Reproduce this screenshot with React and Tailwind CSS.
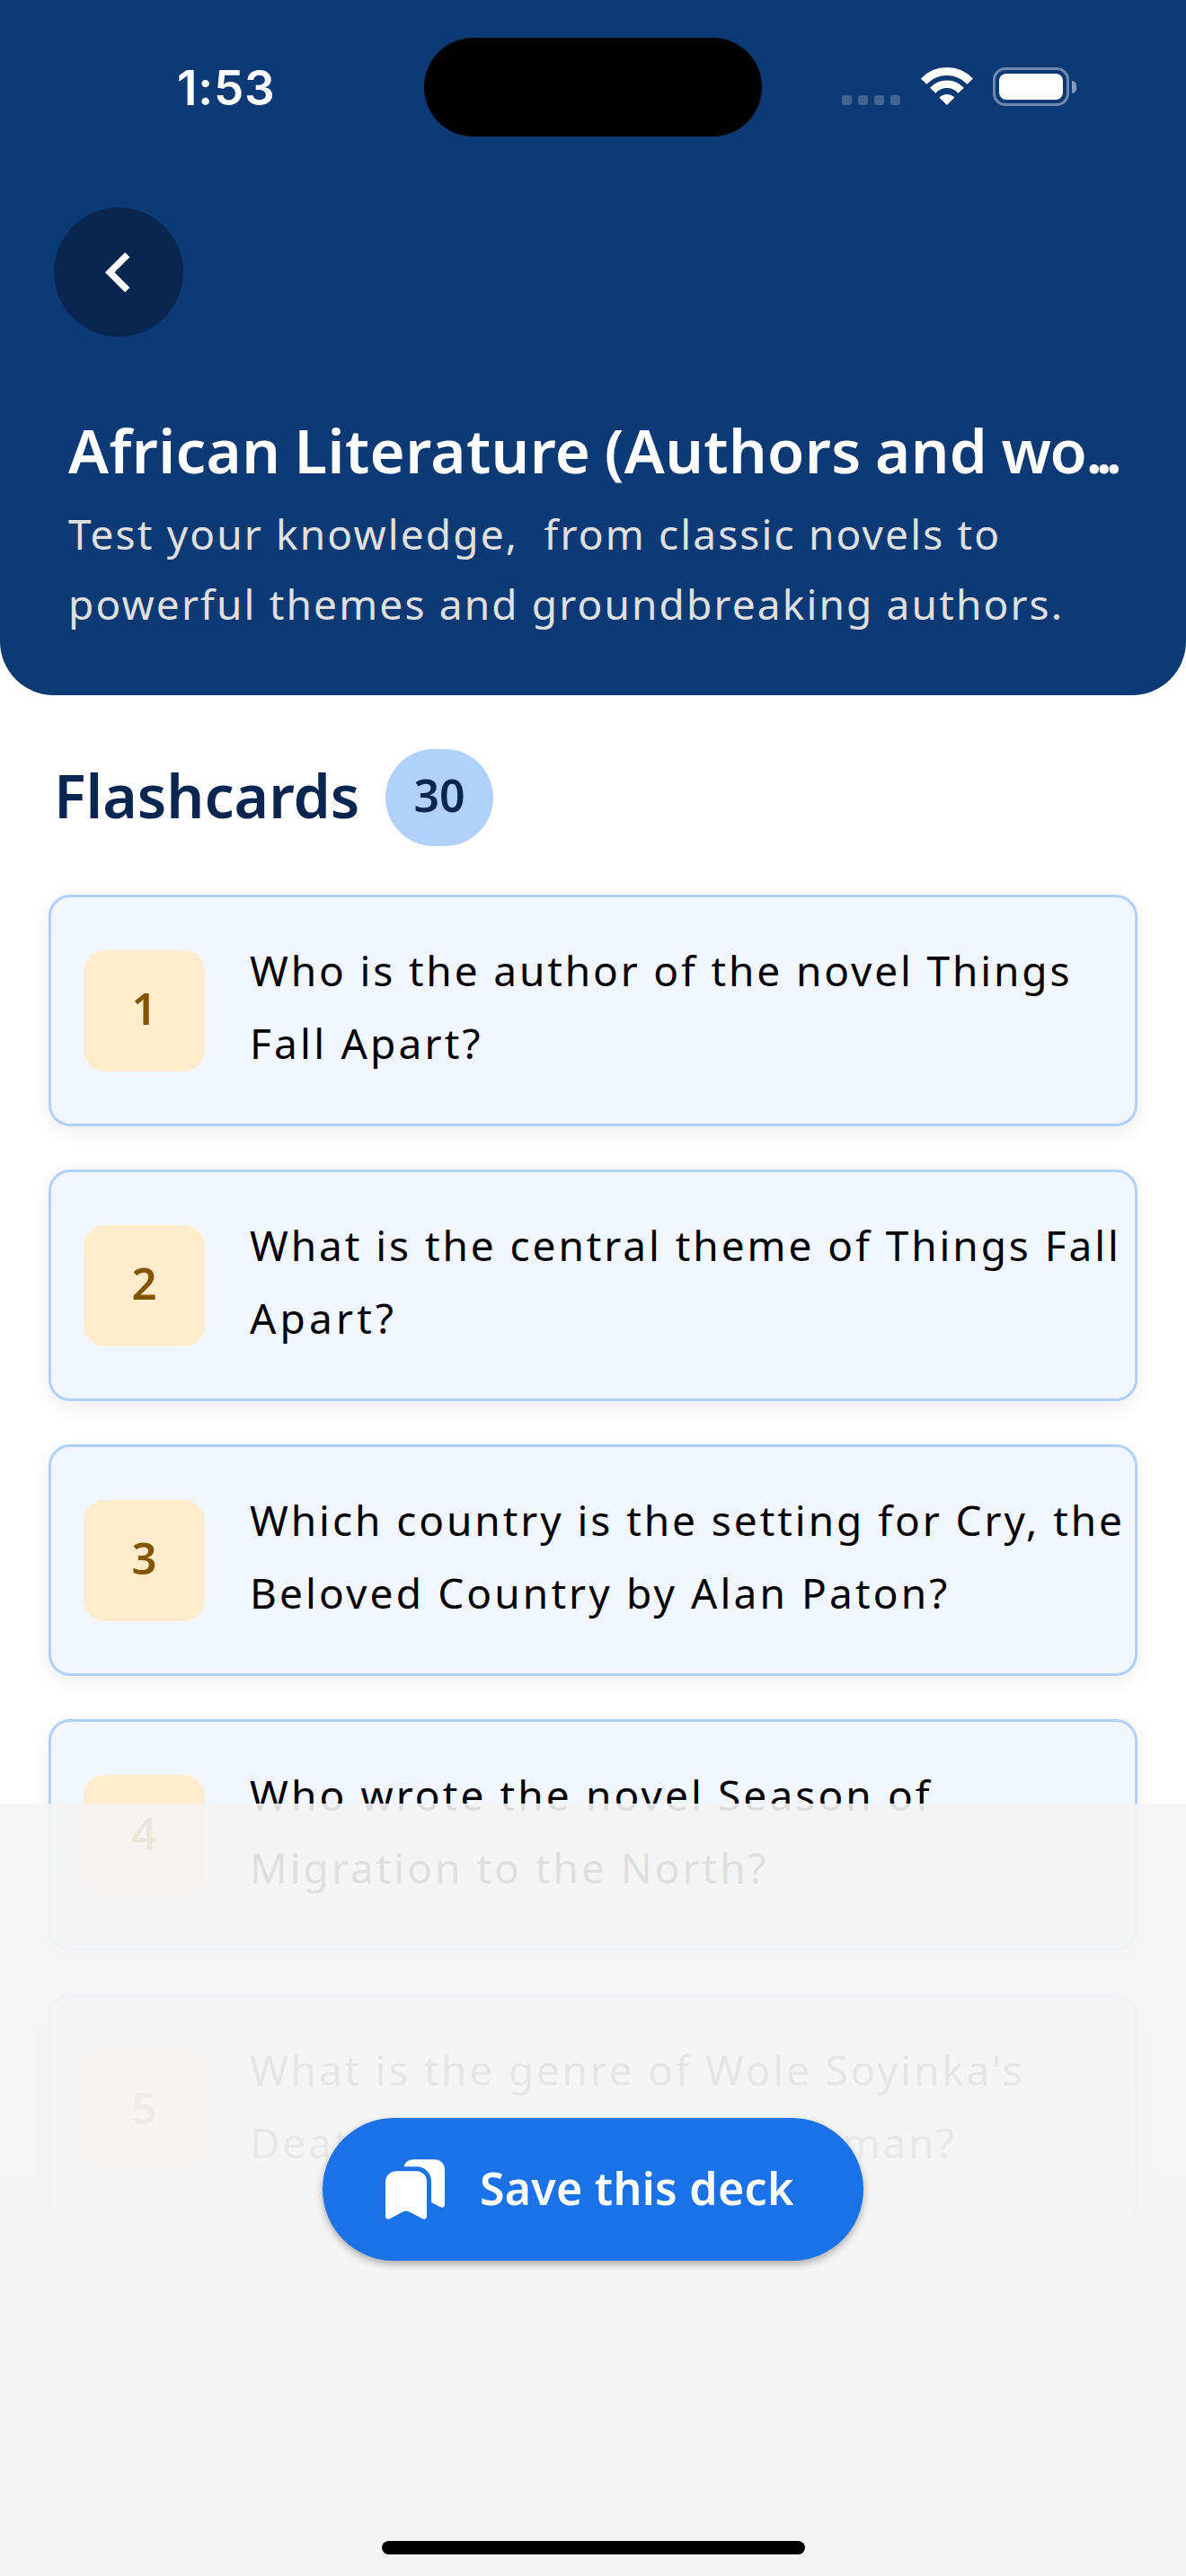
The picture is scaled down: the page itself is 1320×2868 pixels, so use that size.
import React from "react";

const cards = [
  [
    ["Who is the author of the novel Things", "tracking-[2.86px]"],
    ["Fall Apart?", "tracking-[3.2px]"],
  ],
  [
    ["What is the central theme of Things Fall", "tracking-[2.93px]"],
    ["Apart?", "tracking-[4.2px]"],
  ],
  [
    ["Which country is the setting for Cry, the", "tracking-[2.94px]"],
    ["Beloved Country by Alan Paton?", "tracking-[3.12px]"],
  ],
  [
    ["Who wrote the novel Season of", "tracking-[3.1px]"],
    ["Migration to the North?", "tracking-[3px]"],
  ],
  [
    ["What is the genre of Wole Soyinka's", "tracking-[2.78px]"],
    ["Death and the King's Horseman?", "tracking-[2.7px]"],
  ],
];

function WifiIcon() {
  return (
    <svg width="58" height="42" viewBox="0 0 58 42" fill="none" stroke="#fff">
      <path d="M3.1 15.65A35.5 35.5 0 0 1 54.7 15.65" strokeWidth="9" />
      <path d="M13.2 25.75A21.2 21.2 0 0 1 44.6 25.75" strokeWidth="8.6" />
      <path d="M28.9 42L20.4 33.6A12 12 0 0 1 37.4 33.6Z" fill="#fff" stroke="none" />
    </svg>
  );
}

function BookmarksIcon() {
  return (
    <svg width="66" height="68" viewBox="0 0 66 68" fill="#fff">
      <path d="M12 13.2H34.5A11.5 11.5 0 0 1 46 24.7V63.5C46 66.2 43.6 67.4 41.2 66.2L26 58.2Q23 56.7 20 58.2L4.8 66.2C2.4 67.4 0 66.2 0 63.5V25.2A12 12 0 0 1 12 13.2Z" />
      <path d="M31 0.3H55A11 11 0 0 1 66 11.3V50.5C66 53.2 63.6 54.4 61.2 53.2L51 47.9V24.3A16 16 0 0 0 35 8.3H20.7C21.5 3.5 26 0.3 31 0.3Z" />
    </svg>
  );
}

function StatusBar() {
  return (
    <div className="flex h-[192px] items-start">
      <div className="ml-[197px] mt-[66px] w-[275px] whitespace-nowrap font-['Inter',sans-serif] text-[53px] font-semibold leading-[64px] tracking-[0.8px] text-white">
        1:53
      </div>
      <div className="mt-[42px] h-[110px] w-[376px] rounded-full bg-black" />
      <div className="ml-[89px] mt-[106px] flex gap-[7px]">
        {[0, 1, 2, 3].map((i) => (
          <div key={i} className="size-[11px] rounded-[3px] bg-white/22" />
        ))}
      </div>
      <div className="ml-[22.5px] mt-[75px]">
        <WifiIcon />
      </div>
      <div className="ml-[22.5px] mt-[75px] flex items-center gap-[3px]">
        <div className="h-[43px] w-[85px] rounded-[14px] border-3 border-white/40 p-1">
          <div className="h-[29px] w-[71px] rounded-[8px] bg-white" />
        </div>
        <div className="h-[14px] w-[5px] rounded-r-full bg-white/50" />
      </div>
    </div>
  );
}

function Card({ n, lines }) {
  return (
    <div className="flex h-[258px] items-center rounded-[24px] border-3 border-[#b1d0fa] bg-[#f2f6fe] pl-[36px] shadow-[0_6px_22px_rgba(0,0,0,0.07)]">
      <div className="flex size-[135px] shrink-0 items-center justify-center rounded-[24px] bg-[#ffeccc] pb-[4px] text-[49px] font-semibold text-[#845400]">
        {n}
      </div>
      <div className="ml-[50px] pb-[9px] text-[46px] leading-[81px] text-black">
        {lines.map(([text, tracking]) => (
          <div key={text} className={"whitespace-nowrap " + tracking}>
            {text}
          </div>
        ))}
      </div>
    </div>
  );
}

export default function App() {
  return (
    <div className="relative h-[2868px] w-[1320px] overflow-hidden bg-white font-['Noto_Sans',sans-serif]">
      <header className="h-[774px] rounded-b-[60px] bg-[#0d3974]">
        <StatusBar />
        <button className="ml-[60px] mt-[39px] flex size-[144px] items-center justify-center rounded-full bg-[#08264f] pr-[2px]">
          <svg width="27.4" height="44.5" viewBox="8 6 7.41 12" fill="#fff">
            <path d="M15.41 7.41L14 6l-6 6 6 6 1.41-1.41L10.83 12z" />
          </svg>
        </button>
        <h1 className="ml-[76px] mt-[81px] whitespace-nowrap text-[67px] font-semibold leading-[90px] tracking-[0.4px] text-white [word-spacing:-2.5px]">
          African Literature (Authors and <span className="tracking-[-1.5px]">wo</span>
          <span className="tracking-[-7.5px]">...</span>
        </h1>
        <div className="ml-[76px] mt-[9px] whitespace-pre text-[46px] leading-[78px] text-[#e0e0e0]">
          <div className="tracking-[2.15px]">Test your knowledge,  from classic novels to</div>
          <div className="tracking-[2.15px]">powerful themes and groundbreaking authors.</div>
        </div>
      </header>

      <div className="mt-[60px] flex h-[108px] items-center pl-[60px] text-[#08264f]">
        <h2 className="w-[369px] pb-[5px] text-[66px] font-semibold">Flashcards</h2>
        <span className="flex h-[108px] w-[120px] items-center justify-center rounded-full bg-[#b1d0fa] pb-[5px] text-[50px] font-semibold">
          30
        </span>
      </div>

      <main className="mx-[54px] mt-[54px] flex flex-col gap-12">
        {cards.map((lines, i) => (
          <Card key={i} n={i + 1} lines={lines} />
        ))}
      </main>

      <div className="absolute inset-x-0 bottom-0 flex h-[860px] flex-col items-center bg-linear-to-b from-[#f5f5f5]/90 to-[#f5f5f5] pt-[350px]">
        <button className="flex h-[159px] w-[602px] items-center rounded-full bg-[#1b72e8] pl-[70px] text-white shadow-[0_4px_8px_rgba(0,0,0,0.3)]">
          <BookmarksIcon />
          <span className="ml-[39px] whitespace-nowrap pb-[3px] text-[50px] font-semibold tracking-[0.3px]">
            Save this deck
          </span>
        </button>
        <div className="mt-[312px] h-[15px] w-[471px] rounded-full bg-black" />
      </div>
    </div>
  );
}
